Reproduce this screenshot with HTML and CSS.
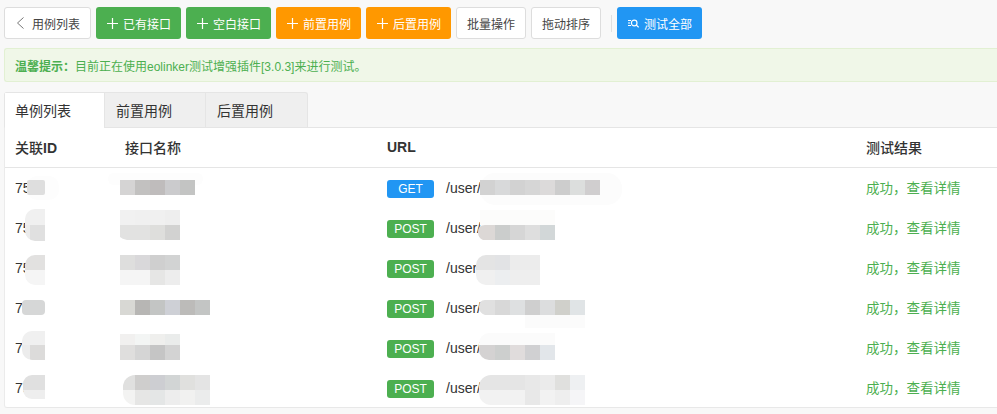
FILE: index.html
```html
<!DOCTYPE html>
<html lang="zh">
<head>
<meta charset="utf-8">
<title>用例列表</title>
<link rel="stylesheet" href="styles.css">
</head>
<body>
<div class="toolbar">
  <button class="btn btn-plain btn-back"><svg class="ico" viewBox="0 0 12 12"><path d="M7.5 .5 1.5 6l6 5.5" fill="none" stroke="#777" stroke-width="1"/></svg>用例列表</button>
  <button class="btn btn-green"><svg class="ico" viewBox="0 0 11 11"><path d="M5.5 0v11M0 5.5h11" stroke="#fff" stroke-width="1.2"/></svg>已有接口</button>
  <button class="btn btn-green"><svg class="ico" viewBox="0 0 11 11"><path d="M5.5 0v11M0 5.5h11" stroke="#fff" stroke-width="1.2"/></svg>空白接口</button>
  <button class="btn btn-orange"><svg class="ico" viewBox="0 0 11 11"><path d="M5.5 0v11M0 5.5h11" stroke="#fff" stroke-width="1.2"/></svg>前置用例</button>
  <button class="btn btn-orange"><svg class="ico" viewBox="0 0 11 11"><path d="M5.5 0v11M0 5.5h11" stroke="#fff" stroke-width="1.2"/></svg>后置用例</button>
  <button class="btn btn-plain btn-small">批量操作</button>
  <button class="btn btn-plain btn-small">拖动排序</button>
  <span class="divider"></span>
  <button class="btn btn-blue"><svg class="ico" viewBox="0 0 11 11"><path d="M0 2.5h3M0 5h2M0 7.5h3" stroke="#fff" stroke-width="1"/><circle cx="6.2" cy="5" r="2.8" fill="none" stroke="#fff" stroke-width="1.2"/><path d="m8.2 7 2.5 2.3" stroke="#fff" stroke-width="1.2"/></svg>测试全部</button>
</div>

<div class="alert"><b>温馨提示：</b>目前正在使用eolinker测试增强插件[3.0.3]来进行测试。</div>

<div class="tabs">
  <div class="tab tab-active">单例列表</div>
  <div class="tab">前置用例</div>
  <div class="tab">后置用例</div>
</div>

<div class="panel">
  <div class="row row-head">
    <div>关联<span class="latin">ID</span></div>
    <div>接口名称</div>
    <div class="latin">URL</div>
    <div>测试结果</div>
  </div>
  <div class="row">
    <div>75</div><div></div>
    <div class="url"><span class="badge badge-get">GET</span>/user/</div>
    <div class="result">成功，查看详情</div>
  </div>
  <div class="row">
    <div>75</div><div></div>
    <div class="url"><span class="badge badge-post">POST</span>/user/</div>
    <div class="result">成功，查看详情</div>
  </div>
  <div class="row">
    <div>75</div><div></div>
    <div class="url"><span class="badge badge-post">POST</span>/user/</div>
    <div class="result">成功，查看详情</div>
  </div>
  <div class="row">
    <div>75</div><div></div>
    <div class="url"><span class="badge badge-post">POST</span>/user/</div>
    <div class="result">成功，查看详情</div>
  </div>
  <div class="row">
    <div>75</div><div></div>
    <div class="url"><span class="badge badge-post">POST</span>/user/</div>
    <div class="result">成功，查看详情</div>
  </div>
  <div class="row">
    <div>75</div><div></div>
    <div class="url"><span class="badge badge-post">POST</span>/user/</div>
    <div class="result">成功，查看详情</div>
  </div>

  <svg class="mosaic" viewBox="4 127 993 281" aria-hidden="true">
    <defs>
      <clipPath id="c-id2"><rect x="25" y="209" width="20" height="32" rx="10"/><rect x="35" y="209" width="10" height="32"/></clipPath>
      <clipPath id="c-id3"><rect x="25" y="255" width="20" height="30" rx="10"/><rect x="35" y="255" width="10" height="30"/></clipPath>
      <clipPath id="c-id5"><rect x="22" y="331" width="23" height="29" rx="10"/><rect x="35" y="331" width="10" height="29"/></clipPath>
      <clipPath id="c-id6"><rect x="23" y="375" width="22" height="24" rx="9"/><rect x="35" y="375" width="10" height="24"/></clipPath>
      <clipPath id="c-nm6"><rect x="123" y="375" width="87" height="30" rx="12"/><rect x="150" y="375" width="60" height="30"/></clipPath>
      <clipPath id="c-u3"><rect x="476" y="255" width="64" height="30" rx="10"/><rect x="495" y="255" width="45" height="30"/></clipPath>
      <clipPath id="c-u5"><rect x="479" y="333" width="76" height="27" rx="10"/><rect x="495" y="333" width="60" height="27"/></clipPath>
      <clipPath id="c-u6"><rect x="479" y="375" width="106" height="30" rx="12"/><rect x="495" y="375" width="90" height="30"/></clipPath>
    </defs>

    <!-- row 1 -->
    <rect x="27" y="176" width="32" height="24" rx="10" fill="#fdfdfd"/>
    <rect x="27" y="180" width="18" height="15" rx="2" fill="#dedede"/>
    <rect x="108" y="173" width="95" height="12" rx="6" fill="#fdfdfd"/>
    <rect x="120" y="180" width="15" height="15" fill="#d5d4d4"/><rect x="135" y="180" width="15" height="15" fill="#c2c1c0"/><rect x="150" y="180" width="15" height="15" fill="#bfbcbc"/><rect x="165" y="180" width="15" height="15" fill="#cbcbcd"/><rect x="180" y="180" width="15" height="15" fill="#c3c4c3"/>
    <rect x="480" y="173" width="142" height="32" rx="15" fill="#fcfcfc"/>
    <rect x="480" y="180" width="15" height="15" fill="#d2d2d2"/><rect x="495" y="180" width="15" height="15" fill="#d8d9da"/><rect x="510" y="180" width="15" height="15" fill="#d2d2d2"/><rect x="525" y="180" width="15" height="15" fill="#d6d6d6"/><rect x="540" y="180" width="15" height="15" fill="#dcdada"/><rect x="555" y="180" width="15" height="15" fill="#cdcdcd"/><rect x="570" y="180" width="15" height="15" fill="#dcdedd"/><rect x="585" y="180" width="15" height="15" fill="#d0cecf"/>

    <!-- row 2 -->
    <g clip-path="url(#c-id2)"><rect x="25" y="209" width="20" height="16" fill="#f0f0f0"/><rect x="25" y="225" width="5" height="16" fill="#ececec"/><rect x="30" y="225" width="15" height="16" fill="#e0e0e0"/></g>
    <rect x="120" y="210" width="15" height="15" fill="#f1f1f1"/><rect x="135" y="210" width="15" height="15" fill="#f0f0f0"/><rect x="150" y="210" width="15" height="15" fill="#f0f0f0"/><rect x="165" y="210" width="15" height="15" fill="#eeeeee"/>
    <path d="M120 225h15v15h-8q-5-1-7-3z" fill="#e2e2e1"/><rect x="135" y="225" width="15" height="15" fill="#e2e2e1"/><rect x="150" y="225" width="15" height="15" fill="#dededc"/><rect x="165" y="225" width="15" height="15" fill="#d2d2d1"/>
    <rect x="480" y="210" width="75" height="15" fill="#fcfcfb"/>
    <path d="M478 232q0-7 7-7h10v15h-12q-5-2-5-8z" fill="#dcd8d6"/><rect x="495" y="225" width="15" height="15" fill="#cbcdcc"/><rect x="510" y="225" width="15" height="15" fill="#d6d6d6"/><rect x="525" y="225" width="15" height="15" fill="#dedede"/><rect x="540" y="225" width="15" height="15" fill="#d2d7d8"/>

    <!-- row 3 -->
    <g clip-path="url(#c-id3)"><rect x="25" y="255" width="20" height="15" fill="#e2e1e0"/><rect x="25" y="270" width="20" height="15" fill="#f5f5f5"/></g>
    <rect x="120" y="255" width="15" height="15" fill="#dededd"/><rect x="135" y="255" width="15" height="15" fill="#d9d8da"/><rect x="150" y="255" width="15" height="15" fill="#cfcfcf"/><rect x="165" y="255" width="15" height="15" fill="#d2d3d3"/>
    <rect x="120" y="270" width="15" height="15" fill="#f5f5f5"/><rect x="135" y="270" width="15" height="15" fill="#f5f5f5"/><rect x="150" y="270" width="15" height="15" fill="#e6e6e5"/><rect x="165" y="270" width="15" height="15" fill="#ededed"/>
    <g clip-path="url(#c-u3)"><rect x="476" y="255" width="19" height="15" fill="#e4e4e4"/><rect x="495" y="255" width="15" height="15" fill="#e2e3e5"/><rect x="510" y="255" width="30" height="15" fill="#ececec"/><rect x="476" y="270" width="19" height="15" fill="#f0f0f0"/><rect x="495" y="270" width="15" height="15" fill="#eceef0"/><rect x="510" y="270" width="30" height="15" fill="#eeeeee"/></g>

    <!-- row 4 -->
    <rect x="22" y="300" width="23" height="15" rx="4" fill="#d6d7d7"/>
    <rect x="120" y="300" width="15" height="15" fill="#d8d8d4"/><rect x="135" y="300" width="15" height="15" fill="#b7b6b4"/><rect x="150" y="300" width="15" height="15" fill="#c3c5c4"/><rect x="165" y="300" width="15" height="15" fill="#ced0d6"/><rect x="180" y="300" width="15" height="15" fill="#bcbbb9"/><rect x="195" y="300" width="15" height="15" fill="#c3c5c4"/>
    <rect x="525" y="315" width="60" height="13" fill="#fbfbfb"/>
    <path d="M479 307q0-7 6-7h10v15h-10q-6-2-6-8z" fill="#e0e0e0"/><rect x="495" y="300" width="15" height="15" fill="#d8d8d8"/><rect x="510" y="300" width="15" height="15" fill="#dee0e1"/><rect x="525" y="300" width="15" height="15" fill="#cfcfcf"/><rect x="540" y="300" width="15" height="15" fill="#dcddde"/><rect x="555" y="300" width="15" height="15" fill="#d0d0cb"/><rect x="570" y="300" width="15" height="15" fill="#e0e4e6"/>

    <!-- row 5 -->
    <g clip-path="url(#c-id5)"><rect x="22" y="331" width="23" height="14" fill="#f0f0f0"/><rect x="22" y="345" width="8" height="15" fill="#ececec"/><rect x="30" y="345" width="15" height="15" fill="#dcdbda"/></g>
    <rect x="120" y="334" width="15" height="11" fill="#f1f0ef"/><rect x="135" y="334" width="15" height="11" fill="#f3f5f4"/><rect x="150" y="334" width="15" height="11" fill="#efefed"/><rect x="165" y="334" width="15" height="11" fill="#eaeceb"/>
    <rect x="120" y="345" width="15" height="15" fill="#dfdedd"/><rect x="135" y="345" width="15" height="15" fill="#d5d5d5"/><rect x="150" y="345" width="15" height="15" fill="#c5c5c5"/><rect x="165" y="345" width="15" height="15" fill="#d3d3d3"/>
    <g clip-path="url(#c-u5)"><rect x="479" y="333" width="76" height="12" fill="#fbfbfb"/><rect x="479" y="345" width="16" height="15" fill="#d4d2d2"/><rect x="495" y="345" width="15" height="15" fill="#cdcfce"/><rect x="510" y="345" width="15" height="15" fill="#e0dcdc"/><rect x="525" y="345" width="15" height="15" fill="#d0d0d2"/><rect x="540" y="345" width="15" height="15" fill="#e2e6ea"/></g>

    <!-- row 6 -->
    <g clip-path="url(#c-id6)"><rect x="23" y="375" width="22" height="15" fill="#e0e0e0"/><rect x="23" y="390" width="22" height="9" fill="#eeeeee"/></g>
    <g clip-path="url(#c-nm6)"><rect x="123" y="375" width="12" height="15" fill="#e0e0df"/><rect x="135" y="375" width="15" height="15" fill="#cfcecd"/><rect x="150" y="375" width="15" height="15" fill="#cdced2"/><rect x="165" y="375" width="15" height="15" fill="#d2d5d5"/><rect x="180" y="375" width="15" height="15" fill="#e0e0de"/><rect x="195" y="375" width="15" height="15" fill="#e4e4e4"/>
    <rect x="123" y="390" width="12" height="15" fill="#f3f3f2"/><rect x="135" y="390" width="15" height="15" fill="#e6e6e5"/><rect x="150" y="390" width="15" height="15" fill="#e4e6e6"/><rect x="165" y="390" width="15" height="15" fill="#ededed"/><rect x="180" y="390" width="15" height="15" fill="#f1f1f0"/><rect x="195" y="390" width="15" height="15" fill="#ebecec"/></g>
    <g clip-path="url(#c-u6)"><rect x="479" y="375" width="46" height="15" fill="#e5e5e5"/><rect x="525" y="375" width="15" height="15" fill="#e8e8e8"/><rect x="540" y="375" width="15" height="15" fill="#ebebeb"/><rect x="555" y="375" width="15" height="15" fill="#e0e0de"/><rect x="570" y="375" width="15" height="15" fill="#eef0f2"/>
    <rect x="479" y="390" width="46" height="15" fill="#f2f2f2"/><rect x="525" y="390" width="15" height="15" fill="#e8e8e8"/><rect x="540" y="390" width="15" height="15" fill="#f2f2f2"/><rect x="555" y="390" width="15" height="15" fill="#eeeeee"/><rect x="570" y="390" width="15" height="15" fill="#f5f5f7"/></g>
  </svg>
</div>
</body>
</html>
```

FILE: styles.css
```css
* { box-sizing: border-box; }

html, body { height: 100%; }

body {
  margin: 0;
  padding: 7px 0 0 4px;
  overflow: hidden;
  background: #f8f8f8;
  color: #333;
  font-family: "Liberation Sans", "Noto Sans CJK SC", sans-serif;
  font-size: 14px;
}

.toolbar {
  display: flex;
  align-items: center;
  gap: 5px;
  height: 32px;
}

.btn {
  display: flex;
  align-items: center;
  justify-content: flex-start;
  gap: 5px;
  width: 85px;
  height: 32px;
  padding: 0 0 0 10px;
  border: 1px solid transparent;
  border-radius: 3px;
  color: #fff;
  font: inherit;
  font-size: 12px;
}

.btn-plain { background: #fff; border-color: #ddd; color: #444; }
.btn-back { width: 87px; gap: 4px; padding-left: 11px; }
.btn-back .ico { width: 12px; height: 12px; }
.btn-small { width: 70px; justify-content: center; padding: 0; }
.btn-green { background: #4caf50; }
.btn-orange { background: #ff9800; }
.btn-blue { background: #2196f3; }

.ico { width: 11px; height: 11px; flex: none; }

.divider {
  width: 1px;
  height: 17px;
  margin-left: 5px;
  background: #e0e0e0;
}

.alert {
  display: flex;
  align-items: center;
  height: 34px;
  margin-top: 9px;
  padding-left: 10px;
  background: #f0f7e8;
  border: 1px solid #e2f0d3;
  border-right: 0;
  border-radius: 3px 0 0 3px;
  color: #4caf50;
  font-size: 12px;
}

.alert b { font-weight: 700; }

.tabs {
  position: relative;
  z-index: 1;
  display: flex;
  width: 304px;
  height: 35px;
  margin-top: 10px;
  background: #efefef;
  border: 1px solid #e5e5e5;
  border-bottom: 0;
  border-radius: 3px 3px 0 0;
}

.tab {
  display: flex;
  align-items: center;
  width: 101px;
  height: 34px;
  padding-left: 11px;
  border-right: 1px solid #e5e5e5;
}

.tab:last-child { border-right: 0; }

.tab-active {
  width: 100px;
  height: 35px;
  padding-left: 10px;
  padding-bottom: 1px;
  background: #fff;
}

.panel {
  position: relative;
  height: 281px;
  background: #fff;
  border-top: 1px solid #e5e5e5;
  border-bottom: 1px solid #e8e8e8;
  border-left: 1px solid #ebebeb;
  border-bottom-left-radius: 3px;
}

.row {
  display: grid;
  grid-template-columns: 120px 262px 479px 1fr;
  align-items: center;
  height: 40px;
}

.row > div:first-child { padding-left: 10px; }

.row-head {
  padding-bottom: 2px;
  border-bottom: 1px solid #e5e5e5;
  font-weight: 500;
}

.latin { font-weight: 700; }

.url {
  display: flex;
  align-items: center;
  gap: 12px;
}

.badge {
  width: 47px;
  height: 18px;
  margin-top: 2px;
  line-height: 18px;
  border-radius: 3px;
  color: #fff;
  font-size: 12px;
  text-align: center;
}

.badge-get { background: #2196f3; }
.badge-post { background: #4caf50; }

.result {
  padding-bottom: 2px;
  color: #4caf50;
  font-size: 13.5px;
}

.mosaic {
  position: absolute;
  top: -1px;
  left: -1px;
  width: 993px;
  height: 281px;
  pointer-events: none;
}
```
